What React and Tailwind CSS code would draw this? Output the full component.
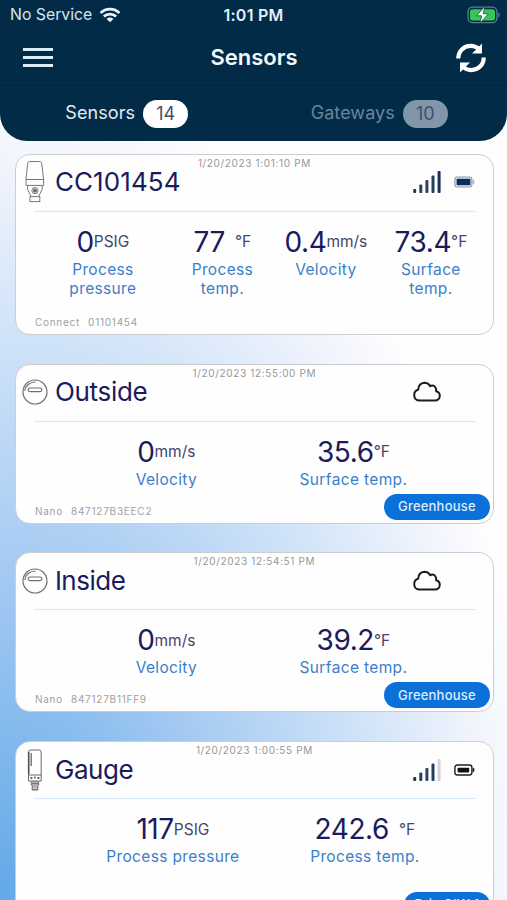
import React from "react";

function WifiIcon() {
  return (
    <svg width="22" height="16" viewBox="0 0 22 16" fill="none" stroke="#eaf6ff" strokeWidth="2.8">
      <path d="M1.6 6 A13.3 13.3 0 0 1 20.4 6" />
      <path d="M4.9 9.6 A8.6 8.6 0 0 1 17.1 9.6" />
      <path d="M11 15.2 L7.6 12 A4.8 4.8 0 0 1 14.4 12 Z" fill="#eaf6ff" stroke="none" />
    </svg>
  );
}

function ChargingIcon() {
  return (
    <svg width="34" height="18" viewBox="0 0 34 18">
      <rect x="1" y="1.2" width="29" height="15.4" rx="4.6" fill="none" stroke="#5c7f93" strokeWidth="1.3" />
      <rect x="3" y="3.2" width="25" height="11.4" rx="2.8" fill="#35c759" />
      <path d="M31.4 6.4 C33.2 7 33.2 10.8 31.4 11.4 Z" fill="#5c7f93" />
      <path d="M17.6 0.6 L9.6 9.8 H14.6 L13 17.2 L21.4 7.8 H16.3 Z" fill="#fff" stroke="#17503f" strokeWidth="0.8" />
    </svg>
  );
}

function RefreshIcon() {
  return (
    <svg width="32" height="32" viewBox="0 0 32 32" fill="none" stroke="#fff" strokeWidth="4.2">
      <path d="M3.3 16.6 C3.3 9 8.8 3.9 15.6 3.9 C19.4 3.9 22.4 5.4 24.6 7.8" />
      <path d="M28.7 15.4 C28.7 23 23.2 28.1 16.4 28.1 C12.6 28.1 9.6 26.6 7.4 24.2" />
      <path d="M27 1.6 V11.6 H17 L20.6 8 Z" fill="#fff" stroke="none" />
      <path d="M5 30.4 V20.4 H15 L11.4 24 Z" fill="#fff" stroke="none" />
    </svg>
  );
}

function ConnectDevice() {
  return (
    <svg width="20" height="44" viewBox="0 0 20 44" fill="none" stroke="#77777c" strokeWidth="1">
      <path d="M2.8 2.6 Q3.4 1.6 4.6 1.5 H14.4 Q16 1.6 16.6 2.6 L18.6 19 V25.4 H1 V19 Z" />
      <path d="M1 19.5 H18.6" />
      <path d="M2.6 25.5 V29.4 L6 36 M17.2 25.5 V29.4 L13.8 36" />
      <rect x="5" y="36.6" width="9.8" height="5" />
      <circle cx="10" cy="30.6" r="3.1" />
      <circle cx="10" cy="30.6" r="1.6" fill="#55555a" />
    </svg>
  );
}

function NanoDevice() {
  return (
    <svg width="26" height="26" viewBox="0 0 26 26" fill="none" stroke="#707074" strokeWidth="1.2">
      <circle cx="13" cy="13" r="12" />
      <path d="M2.8 12 C3.2 6.8 8 3 13.6 3" />
      <rect x="6.2" y="9" width="13.6" height="3.6" rx="1.8" />
    </svg>
  );
}

function GaugeDevice() {
  return (
    <svg width="16" height="44" viewBox="0 0 16 44" fill="none" stroke="#68686c" strokeWidth="1">
      <path d="M1.5 33 V4 Q1.5 2 4 2 H12 Q14.2 2 14.2 4 V33 Z" />
      <path d="M1.7 4 V26" strokeWidth="1.6" stroke="#4d4d50" />
      <path d="M4.2 5 V18" strokeWidth="1.3" />
      <path d="M1.5 27 H14.2" />
      <path d="M3.4 30 H5.4 M7 29.5 H8.6 M10.4 30 H12.4" strokeWidth="1.8" />
      <path d="M4.2 34 H11.6 V37 H4.2 Z M5.2 37.4 V42 H10.8 V37.4" />
      <path d="M5 35.6 H11 M5.4 39 H10.8 M5.4 41.2 H10.8" />
    </svg>
  );
}

const devices = { connect: ConnectDevice, nano: NanoDevice, gauge: GaugeDevice };

function Signal({ level }) {
  const heights = [4, 8.5, 13, 17.5, 22];
  return (
    <svg width="28" height="24" viewBox="0 0 28 24">
      {heights.map((h, i) => (
        <rect
          key={h}
          x={0.2 + i * 6.1}
          y={23 - h}
          width="3"
          height={h}
          rx="0.9"
          fill={i < level ? ["#26364b", "#2a3f58", "#2c4661", "#23405f", "#163252"][i] : "#d4d4d6"}
        />
      ))}
    </svg>
  );
}

function Battery({ kind }) {
  const connected = kind === "blue";
  return (
    <svg width="21" height="12" viewBox="0 0 21 12">
      <rect x="0.9" y="1" width="17" height="10" rx="2.4" fill={connected ? "#e6ebf2" : "#fff"} stroke={connected ? "#8c96a8" : "#1c1c1e"} strokeWidth={connected ? 1.1 : 1.4} />
      <path d="M18.7 3.6 Q20.6 4 20.5 6 Q20.6 8 18.7 8.4 Z" fill={connected ? "#a7afbd" : "#1c1c1e"} />
      <rect x={connected ? 2.6 : 3.6} y={connected ? 2.7 : 3.8} width={connected ? 13.8 : 11.6} height={connected ? 6.6 : 4.6} rx="0.8" fill={connected ? "#0b2c5c" : "#111"} />
    </svg>
  );
}

function Cloud() {
  return (
    <svg width="28" height="22" viewBox="0 0 28 22" fill="none" stroke="#1d1d1f" strokeWidth="2" strokeLinejoin="round">
      <path d="M6.6 19.6 H21.8 C24.8 19.6 26.8 17.6 26.8 14.8 C26.8 12.4 25.3 10.8 23.2 10.2 C23.4 7 22 4.6 19.2 4.6 C18.4 4.6 17.7 4.9 17.2 5.3 C16 3 14 1.8 11.4 1.8 C7.8 2 5.4 4.6 5.2 8.8 C2.8 9.4 1.2 11.4 1.2 14 C1.2 17.2 3.4 19.6 6.6 19.6 Z" />
    </svg>
  );
}

function Reading({ value, unit, label, gap, className }) {
  return (
    <div className={`flex shrink-0 flex-col items-center ${className}`}>
      <div className="flex h-8 items-center whitespace-nowrap text-[#1b1b5c]">
        <span className="text-[28px] tracking-[-0.4px]">{value}</span>
        <span className={`text-[15.5px] text-[#45456b] ${gap ? "ml-[10px]" : ""}`}>{unit}</span>
      </div>
      <div className="mt-[2px] whitespace-pre-line text-center text-[15.5px] leading-[19px] tracking-[0.35px] text-[#3b7fca]">{label}</div>
    </div>
  );
}

function SensorCard({ sensor }) {
  const Device = devices[sensor.device];
  return (
    <section className={`relative flex w-[479px] shrink-0 flex-col rounded-[15px] border border-[#cdced2] bg-[#fefefe] ${sensor.height}`}>
      <time className="absolute inset-x-0 top-[2px] text-center text-[10px] leading-3 tracking-[0.65px] text-[#97979b]">{sensor.date}</time>
      <div className="mr-[18px] flex h-[56px] shrink-0 items-center pb-px">
        <div className="flex w-[39px] shrink-0 justify-center">
          <Device />
        </div>
        <h2 className={`flex-1 text-[26px] leading-8 text-[#1b1b5c] ${sensor.nameStyle}`}>{sensor.name}</h2>
        <div className="flex w-[62px] items-center justify-between">
          {sensor.level ? <Signal level={sensor.level} /> : <Cloud />}
          {sensor.battery && <Battery kind={sensor.battery} />}
        </div>
      </div>
      <div className="ml-[19px] mr-[18px] h-px shrink-0 bg-[#d5e7f8] shadow-[0_0_1px_#d5e7f8]" />
      <div className={`mt-[14px] flex ${sensor.start}`}>
        {sensor.readings.map((r) => (
          <Reading key={r.label} {...r} />
        ))}
      </div>
      {sensor.serial && (
        <div className="absolute bottom-[6px] left-[19px] flex gap-2 text-[10px] leading-3 tracking-[0.75px] text-[#a0a0a3]">
          <span>{sensor.model}</span>
          <span>{sensor.serial}</span>
        </div>
      )}
      {sensor.tag && (
        <div className={`absolute bottom-[3px] right-[3px] flex h-[26px] items-center justify-center rounded-full bg-[#0b70d8] text-[13px] font-medium tracking-[0.2px] text-[#dceeff] ${sensor.tagWidth}`}>
          {sensor.tag}
        </div>
      )}
    </section>
  );
}

const sensors = [
  {
    name: "CC101454", device: "connect", date: "1/20/2023 1:01:10 PM", level: 5, battery: "blue",
    height: "h-[181px]", start: "pl-[19px]", model: "Connect", serial: "01101454", nameStyle: "tracking-[0.1px]",
    readings: [
      { value: "0", unit: "PSIG", label: "Process\npressure", className: "w-[136px]" },
      { value: "77", unit: "°F", label: "Process\ntemp.", gap: true, className: "w-[103px]" },
      { value: "0.4", unit: "mm/s", label: "Velocity", className: "w-[104px]" },
      { value: "73.4", unit: "°F", label: "Surface\ntemp.", className: "w-[106px]" },
    ],
  },
  {
    name: "Outside", device: "nano", date: "1/20/2023 12:55:00 PM",
    height: "h-[160px]", start: "pl-[57px]", model: "Nano", serial: "847127B3EEC2", nameStyle: "tracking-[-0.3px]",
    tag: "Greenhouse", tagWidth: "w-[106px]",
    readings: [
      { value: "0", unit: "mm/s", label: "Velocity", className: "w-[187px]" },
      { value: "35.6", unit: "°F", label: "Surface temp.", className: "w-[187px]" },
    ],
  },
  {
    name: "Inside", device: "nano", date: "1/20/2023 12:54:51 PM",
    height: "h-[160px]", start: "pl-[57px]", model: "Nano", serial: "847127B11FF9", nameStyle: "tracking-[-0.5px]",
    tag: "Greenhouse", tagWidth: "w-[106px]",
    readings: [
      { value: "0", unit: "mm/s", label: "Velocity", className: "w-[187px]" },
      { value: "39.2", unit: "°F", label: "Surface temp.", className: "w-[187px]" },
    ],
  },
  {
    name: "Gauge", device: "gauge", date: "1/20/2023 1:00:55 PM", level: 4, battery: "black",
    height: "h-[181px]", start: "pl-[61px]", nameStyle: "tracking-[-0.4px]",
    tag: "Brix CIW 1", tagWidth: "w-[86px]",
    readings: [
      { value: "117", unit: "PSIG", label: "Process pressure", className: "w-[192px]" },
      { value: "242.6", unit: "°F", label: "Process temp.", gap: true, className: "w-[192px]" },
    ],
  },
];

export default function App() {
  return (
    <div className="h-[900px] w-[507px] overflow-hidden bg-[radial-gradient(505px_760px_at_0_900px,#62a8e8_0%,#aacdf3_47%,#cfe3f8_74%,#f3f5fd_98%,#fefeff_108%)] font-['Inter',sans-serif]">
      <header className="flex h-[141px] flex-col rounded-b-[27px] bg-[#022b48] text-white">
        <div className="grid h-[30px] grid-cols-[1fr_auto_1fr] items-center pl-[10px] pr-[10px]">
          <div className="flex items-center gap-[7px] text-[15.8px] text-[#d5e5ef]">
            <span>No Service</span>
            <WifiIcon />
          </div>
          <div className="text-[16px] font-semibold tracking-[0.25px] text-[#e3f0f8]">1:01 PM</div>
          <div className="-mr-1 flex justify-end">
            <ChargingIcon />
          </div>
        </div>
        <div className="flex h-[56px] items-center justify-between border-b border-[#01243d] pl-[23px] pr-5">
          <button aria-label="Menu" className="flex w-[30px] flex-col gap-[5px]">
            <span className="h-[3px] bg-[#dcecf8]" />
            <span className="h-[3px] bg-[#dcecf8]" />
            <span className="h-[3px] bg-[#dcecf8]" />
          </button>
          <h1 className="text-[22px] font-semibold text-[#f2f8fc]">Sensors</h1>
          <button aria-label="Refresh">
            <RefreshIcon />
          </button>
        </div>
        <nav className="grid h-[55px] grid-cols-2 items-center text-[18px]">
          <div className="flex items-center justify-center gap-2 text-[#e0edf6]">
            <span className="-mt-[2px] tracking-[0.1px]">Sensors</span>
            <span className="flex h-7 w-[45px] items-center justify-center rounded-full bg-white text-[18px] text-[#4a4d63]">14</span>
          </div>
          <div className="flex items-center justify-center gap-2 pr-[2px] text-[#68859b]">
            <span className="-mt-[2px] tracking-[0.05px]">Gateways</span>
            <span className="flex h-7 w-[45px] items-center justify-center rounded-full bg-[#8196a8] text-[18px] text-[#3c5169]">10</span>
          </div>
        </nav>
      </header>
      <main className="flex flex-col gap-[28.8px] pl-[14.9px] pt-[12.8px]">
        {sensors.map((s) => (
          <SensorCard key={s.name} sensor={s} />
        ))}
      </main>
    </div>
  );
}
